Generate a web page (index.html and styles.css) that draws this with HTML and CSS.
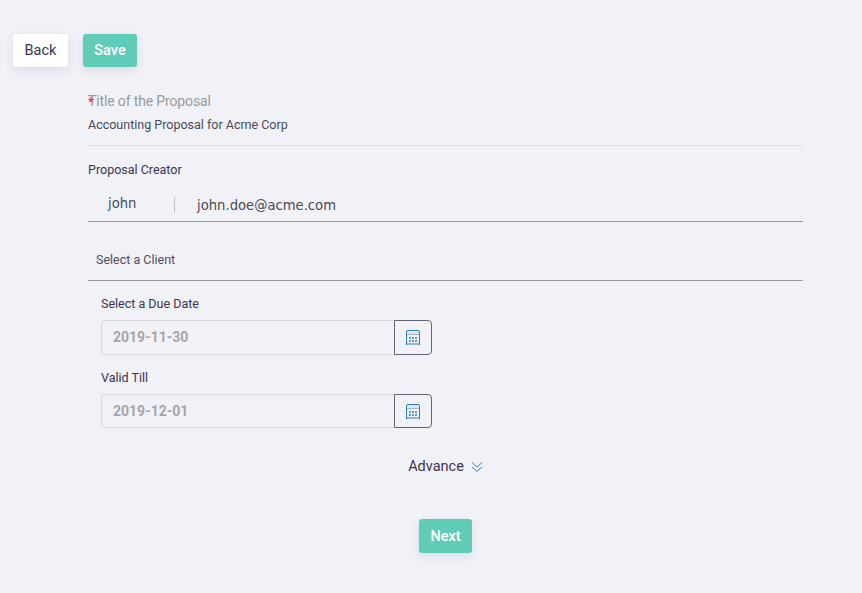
FILE: index.html
```html
<!DOCTYPE html>
<html lang="en">
<head>
<meta charset="utf-8">
<title>Proposal</title>
<link rel="stylesheet" href="styles.css">
</head>
<body>
<div class="toolbar">
  <button class="btn btn-white" type="button">Back</button>
  <button class="btn btn-green" type="button">Save</button>
</div>
<main class="form">
  <section class="title-block">
    <div class="title-label"><span class="star">*</span>Title of the Proposal</div>
    <div class="title-value">Accounting Proposal for Acme Corp</div>
  </section>
  <section class="creator">
    <div class="label">Proposal Creator</div>
    <div class="creator-row">
      <span class="name">john</span>
      <span class="email">john.doe@acme.com</span>
    </div>
  </section>
  <div class="client">Select a Client</div>
  <section class="dates">
    <div class="label">Select a Due Date</div>
    <div class="date-group">
      <div class="date-input">2019-11-30</div>
      <button class="date-btn" type="button" aria-label="Open calendar">
        <svg class="cal" viewBox="0 0 14 15" width="14" height="15"><path d="M1 .5h12M.5 1v14M13.500 1v14" fill="none" stroke="#2f7fbd"/><path d="M0 13.500h14v1H0z" fill="#2f7fbd"/><path d="M1 1h12v3H1z" fill="#dfe3ea"/><path d="M1 4h12v1H1z" fill="#a9b8c8"/><path d="M3 7h2v2H3zM6 7h2v2H6zM9 7h2v2H9zM3 10h2v2H3zM6 10h2v2H6zM9 10h2v2H9z" fill="#5a9bd0"/></svg>
      </button>
    </div>
    <div class="label">Valid Till</div>
    <div class="date-group">
      <div class="date-input">2019-12-01</div>
      <button class="date-btn" type="button" aria-label="Open calendar">
        <svg class="cal" viewBox="0 0 14 15" width="14" height="15"><path d="M1 .5h12M.5 1v14M13.500 1v14" fill="none" stroke="#2f7fbd"/><path d="M0 13.500h14v1H0z" fill="#2f7fbd"/><path d="M1 1h12v3H1z" fill="#dfe3ea"/><path d="M1 4h12v1H1z" fill="#a9b8c8"/><path d="M3 7h2v2H3zM6 7h2v2H6zM9 7h2v2H9zM3 10h2v2H3zM6 10h2v2H6zM9 10h2v2H9z" fill="#5a9bd0"/></svg>
      </button>
    </div>
  </section>
  <div class="advance">
    <span>Advance</span>
    <svg viewBox="0 0 12 12" width="12" height="12"><path d="M1 1.500l5 4.500 5-4.500M1 6l5 4.500L11 6" fill="none" stroke="#3d86c6" stroke-width="1"/></svg>
  </div>
  <div class="next-row">
    <button class="btn btn-green" type="button">Next</button>
  </div>
</main>
</body>
</html>
```

FILE: styles.css
```css
* { box-sizing: border-box; }
html, body { margin: 0; height: 100%; }
body {
  background: #f1f2f8;
  font-family: Roboto, "Liberation Sans", sans-serif;
  color: #3b3350;
  overflow: hidden;
  padding: 34px 0 0 13px;
}
.toolbar { display: flex; gap: 15px; }
.btn {
  height: 33px;
  padding: 0;
  border: 0;
  border-radius: 3px;
  font-family: inherit;
  font-size: 14.5px;
  line-height: 33px;
  box-shadow: 0 3px 10px rgba(60, 60, 90, .12);
}
.btn-white { background: #fff; color: #3b3350; width: 55px; }
.btn-green { background: #60ccb8; color: #fff; font-weight: 500; width: 54px; }
.form { width: 715px; margin-left: 75px; }
.title-block { padding-top: 26px; height: 79px; border-bottom: 1px solid #dfe0e6; }
.title-label { position: relative; font-size: 14px; letter-spacing: -.14px; line-height: 17px; color: #999; }
.star { position: absolute; left: 0; top: 0; color: #f03a3a; font-size: 13px; line-height: 17px; font-weight: 700; }
.title-value { margin-top: 7px; font-size: 12.5px; line-height: 16px; color: #4a4a55; }
.label { font-size: 12.5px; line-height: 16px; color: #3b3350; }
.creator { padding-top: 16px; }
.creator-row {
  display: flex;
  height: 40px;
  margin-top: 4px;
  border-bottom: 1px solid #9a9a9f;
  font-family: "DejaVu Sans", sans-serif;
  font-size: 13.2px;
  color: #4a4a55;
}
.name { width: 87px; height: 16px; margin-top: 15px; padding-left: 20px; line-height: 14px; border-right: 1px solid #c4c4c8; }
.email { padding-left: 22px; padding-top: 15px; line-height: 18px; }
.client {
  height: 59px;
  padding: 30px 0 0 8px;
  border-bottom: 1px solid #9a9a9f;
  font-size: 12.5px;
  line-height: 16px;
  color: #4f4a62;
}
.dates { padding: 15px 0 0 13px; }
.date-group { display: flex; width: 331px; height: 35px; margin: 8px 0 15px; }
.date-group:last-child { height: 34px; margin-bottom: 0; }
.date-input {
  flex: 1;
  padding-left: 11px;
  border: 1px solid #d8d9df;
  border-right: 0;
  border-radius: 4px 0 0 4px;
  font-size: 14px;
  font-weight: 700;
  line-height: 33px;
  color: #a5a5a8;
}
.date-btn {
  display: flex;
  align-items: center;
  justify-content: center;
  width: 38px;
  padding: 0;
  background: transparent;
  border: 1px solid #5f6570;
  border-radius: 0 4px 4px 0;
}
.advance {
  display: flex;
  justify-content: center;
  align-items: center;
  gap: 7px;
  margin-top: 30px;
  height: 18px;
  font-size: 14.5px;
  line-height: 18px;
  color: #3b3350;
}
.next-row { display: flex; justify-content: center; margin-top: 43px; }
.next-row .btn { width: 53px; height: 34px; }
```
